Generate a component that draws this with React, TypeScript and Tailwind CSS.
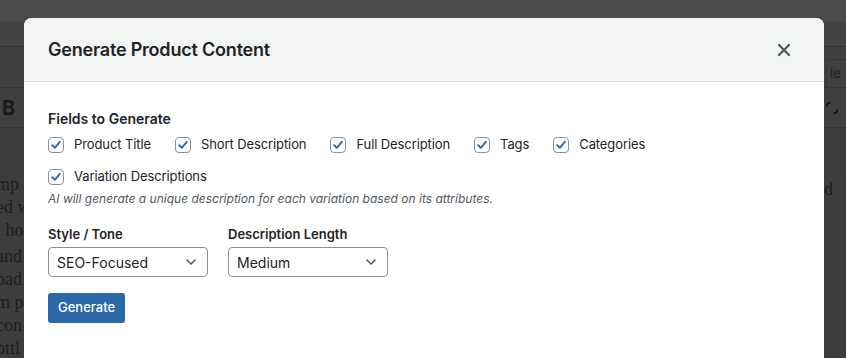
import React from "react";

const fields = [
  "Product Title",
  "Short Description",
  "Full Description",
  "Tags",
  "Categories",
  "Variation Descriptions",
];

function Check() {
  return (
    <span className="flex h-4 w-4 shrink-0 items-center justify-center rounded-[4px] border border-[#8c8f94] bg-white">
      <svg width="12" height="12" viewBox="0 0 12 12">
        <path d="M2.2 6.3 L4.8 8.8 L9.8 2.8" fill="none" stroke="#2f6fb3" strokeWidth="2" strokeLinecap="round" strokeLinejoin="round" />
      </svg>
    </span>
  );
}

function Select({ value }: { value: string }) {
  return (
    <div className="flex h-[30px] w-[160px] items-center justify-between rounded-[4px] border border-[#8c8f94] bg-white pl-[8px] pr-[10px] text-[14px] text-[#1d2327]">
      <span>{value}</span>
      <svg width="12" height="8" viewBox="0 0 12 8">
        <path d="M1.5 1.5 L6 6 L10.5 1.5" fill="none" stroke="#50575e" strokeWidth="1.5" />
      </svg>
    </div>
  );
}

export default function App() {
  return (
    <div className="relative h-[358px] w-[846px] overflow-hidden bg-[#3d3d3d]" style={{ fontFamily: "Inter, 'Noto Sans', sans-serif" }}>
      {/* dimmed background page */}
      <div className="flex h-full flex-col">
        <div className="h-[22px] shrink-0 bg-[#4b4b4b]" />
        <div className="h-[25px] shrink-0 border-b border-[#353535] bg-[#434343]" />
        <div className="flex h-[41px] shrink-0 justify-end border-b border-[#353535] bg-[#3f3f3f]">
          <div className="mt-[12px] flex h-[29px] w-[20px] items-center border border-r-0 border-[#353535] pl-[3px] text-[13px] text-[#222]">le</div>
        </div>
        <div className="flex h-[40px] shrink-0 items-center justify-between border-b border-[#353535] bg-[#3f3f3f] px-[2px]">
          <span className="text-[20px] font-bold text-[#1a1a1a]">B</span>
          <svg width="12" height="12" viewBox="0 0 12 12" className="mr-[6px]">
            <path d="M1 1h4M1 1v4M11 11h-4M11 11v-4" stroke="#1a1a1a" strokeWidth="2" fill="none" />
          </svg>
        </div>
        <div className="flex min-h-0 flex-1 justify-between overflow-hidden bg-[#3d3d3d] text-[18px] leading-[23px] text-[#1e1e1e]" style={{ fontFamily: "'Liberation Serif', serif" }}>
          <div className="-ml-[4px] mt-[45px] flex flex-col">
            <span>mp g</span>
            <span>ed w</span>
            <span>t ho</span>
            <span className="mt-[3px]">and</span>
            <span>pad</span>
            <span>m p</span>
            <span>con</span>
            <span>ottl</span>
          </div>
          <div className="mt-[50px] h-[400px] w-[22px] border-r border-[#353535] pr-[4px]">
            <span>d</span>
          </div>
        </div>
      </div>

      {/* modal */}
      <div className="absolute left-[24px] top-[18px] h-[360px] w-[800px] overflow-hidden rounded-t-[8px] bg-white">
        <div className="flex h-[64px] items-center justify-between border-b border-[#dcdcde] bg-[#f3f5f5] pl-[24px] pr-[33px]">
          <h1 className="text-[18px] font-semibold tracking-[-0.2px] text-[#1d2327]">Generate Product Content</h1>
          <svg width="14" height="14" viewBox="0 0 14 14">
            <path d="M2 2 L12 12 M12 2 L2 12" stroke="#50575e" strokeWidth="2.2" strokeLinecap="round" />
          </svg>
        </div>
        <div className="px-[24px] pt-[26px]">
          <div className="text-[14px] font-semibold text-[#1d2327]">Fields to Generate</div>
          <div className="mt-[6px] flex flex-wrap gap-x-[24px] gap-y-[12px]">
            {fields.map((f) => (
              <label key={f} className="flex h-[20px] items-center gap-[10px] text-[13px] tracking-[-0.1px] text-[#1d2327]">
                <Check />
                <span>{f}</span>
              </label>
            ))}
          </div>
          <p className="mt-[3px] text-[12px] italic text-[#50575e]">
            AI will generate a unique description for each variation based on its attributes.
          </p>
          <div className="mt-[18px] flex gap-[20px]">
            <div className="flex flex-col gap-[5px]">
              <span className="text-[13px] font-semibold leading-[16px] text-[#1d2327]">Style / Tone</span>
              <Select value="SEO-Focused" />
            </div>
            <div className="flex flex-col gap-[5px]">
              <span className="text-[13px] font-semibold leading-[16px] text-[#1d2327]">Description Length</span>
              <Select value="Medium" />
            </div>
          </div>
          <button className="mt-[16px] h-[30px] rounded-[3px] bg-[#2c69a8] px-[10px] text-[13px] font-medium text-white">
            Generate
          </button>
        </div>
      </div>
    </div>
  );
}
